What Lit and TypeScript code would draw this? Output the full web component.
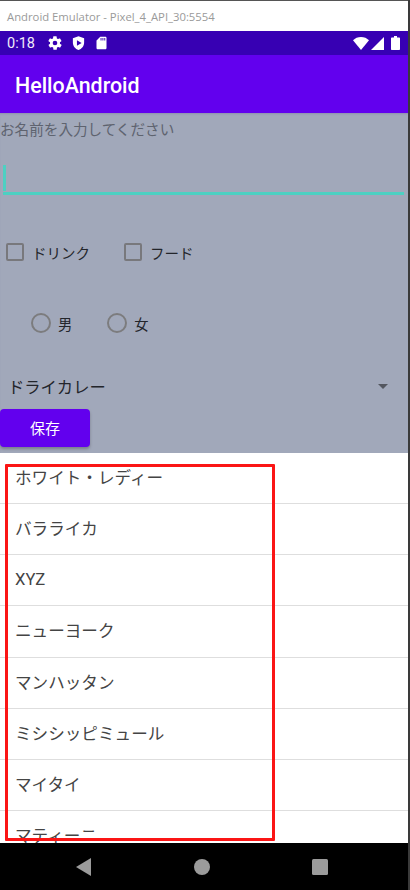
import { LitElement, html, css, svg } from "lit";
import { customElement } from "lit/decorators.js";

const drinks = [
  "ホワイト・レディー",
  "バラライカ",
  "XYZ",
  "ニューヨーク",
  "マンハッタン",
  "ミシシッピミュール",
  "マイタイ",
  "マティーニ",
];

const gear = svg`<path fill="#fff" d="M19.4 13a7.5 7.5 0 0 0 0-2l2.1-1.6a.5.5 0 0 0 .1-.6l-2-3.5a.5.5 0 0 0-.6-.2l-2.5 1a7.3 7.3 0 0 0-1.7-1l-.4-2.7a.5.5 0 0 0-.5-.4h-4a.5.5 0 0 0-.5.4l-.4 2.7a7.3 7.3 0 0 0-1.7 1l-2.5-1a.5.5 0 0 0-.6.2l-2 3.5a.5.5 0 0 0 .1.6L4.6 11a7.5 7.5 0 0 0 0 2l-2.1 1.6a.5.5 0 0 0-.1.6l2 3.5c.1.2.4.3.6.2l2.5-1c.5.4 1.1.7 1.7 1l.4 2.7c0 .2.2.4.5.4h4c.3 0 .5-.2.5-.4l.4-2.7c.6-.3 1.2-.6 1.7-1l2.5 1c.2.1.5 0 .6-.2l2-3.5a.5.5 0 0 0-.1-.6zM12 15.5a3.5 3.5 0 1 1 0-7 3.5 3.5 0 0 1 0 7z"/>`;
const shield = svg`<path fill="#fff" fill-rule="evenodd" d="M12 1 3 4.500v6.600c0 5.500 3.800 10.500 9 11.900 5.200-1.400 9-6.400 9-11.900V4.500zM9.500 7.500l7.500 4.500-7.500 4.500z"/>`;
const sdCard = svg`<path fill="#fff" d="M18 2h-8L4 8v12c0 1.100.9 2 2 2h12c1.100 0 2-.9 2-2V4c0-1.100-.9-2-2-2zm-6 6h-1.500V4H12zm3 0h-1.500V4H15zm3 0h-1.500V4H18z"/>`;

@customElement("app-root")
export class AppRoot extends LitElement {
  static override styles = css`
    :host {
      display: flex;
      flex-direction: column;
      position: relative;
      width: 410px;
      height: 890px;
      overflow: hidden;
      font-family: Roboto, "Noto Sans CJK JP", sans-serif;
      background: #fff;
    }

    .title-bar {
      flex: none;
      height: 31px;
      box-sizing: border-box;
      padding: 0 0 0 7px;
      display: flex;
      align-items: center;
      background: #fff;
      border-top: 1px solid #555;
      color: #9a9a9a;
      font-family: "Open Sans", sans-serif;
      font-size: 11.3px;
    }

    .status-bar {
      flex: none;
      height: 24px;
      display: flex;
      align-items: center;
      background: #3700b3;
      color: #fff;
      padding: 0 10px 0 7px;
      font-size: 14.5px;
    }
    .status-bar .time {
      width: 40px;
      color: #f0ecfa;
    }
    .status-bar svg {
      display: block;
      flex: none;
    }
    .status-icons {
      display: flex;
      align-items: center;
      gap: 8px;
    }
    .status-right {
      margin-left: auto;
      display: flex;
      align-items: center;
      gap: 2px;
    }

    .app-bar {
      flex: none;
      height: 58px;
      box-sizing: border-box;
      padding: 3px 0 0 15px;
      display: flex;
      align-items: center;
      background: #6200ee;
      color: #fff;
      font-size: 21.4px;
      font-weight: 500;
    }

    .form {
      flex: none;
      height: 340px;
      box-sizing: border-box;
      display: flex;
      flex-direction: column;
      background: #a1a8ba;
      color: #23252b;
      box-shadow: inset 0 2px 2px -1px #8f8fb0;
    }

    .hint {
      height: 32px;
      padding-top: 1px;
      line-height: 33px;
      font-size: 14.6px;
      color: #5e636f;
    }

    .input {
      position: relative;
      margin: 19px 6px 0 3px;
      height: 30px;
      box-sizing: border-box;
      border-bottom: 3px solid #4dd0c2;
    }
    .input::before {
      content: "";
      position: absolute;
      left: 0;
      top: 0;
      bottom: 1px;
      width: 3px;
      background: #4dd0c2;
    }

    .checks {
      margin-top: 47px;
      height: 20px;
      display: flex;
      align-items: center;
      padding-left: 6px;
      font-size: 14.5px;
    }
    .box {
      width: 18px;
      height: 18px;
      box-sizing: border-box;
      border: 2px solid #78787c;
      border-radius: 2px;
      margin-right: 8px;
    }
    .checks .gap {
      width: 34px;
    }

    .radios {
      margin-top: 50px;
      height: 22px;
      display: flex;
      align-items: center;
      padding-left: 31px;
      font-size: 14.3px;
    }
    .circle {
      width: 20px;
      height: 20px;
      box-sizing: border-box;
      border: 2px solid #7c7c7e;
      border-radius: 50%;
      margin-right: 7px;
    }
    .radios .gap {
      width: 35px;
    }

    .spinner {
      margin-top: 37px;
      height: 30px;
      display: flex;
      align-items: center;
      justify-content: space-between;
      padding: 0 22px 0 8px;
      font-size: 16.3px;
    }
    .arrow {
      width: 0;
      height: 0;
      border-left: 5px solid transparent;
      border-right: 5px solid transparent;
      border-top: 5px solid #53565f;
    }

    .save {
      margin-top: 8px;
      width: 90px;
      height: 38px;
      padding: 0 0 1px;
      border: none;
      border-radius: 4px;
      background: #6200ee;
      color: #fff;
      font: inherit;
      font-size: 15px;
      box-shadow: 0 2px 3px rgba(0, 0, 0, 0.25);
    }

    .list {
      flex: 1;
      min-height: 0;
      overflow: hidden;
      background: #fff;
      color: #444;
    }
    .row {
      height: 50.2px;
      box-sizing: content-box;
      display: flex;
      align-items: center;
      padding-left: 15px;
      font-size: 16.6px;
      border-bottom: 1px solid #dedede;
    }
    .row span {
      position: relative;
      top: -1px;
    }
    .row:first-child {
      height: 51px;
      align-items: flex-end;
      padding-bottom: 13px;
      box-sizing: border-box;
    }

    .nav {
      flex: none;
      height: 47px;
      display: flex;
      align-items: center;
      background: #000;
      padding-left: 76px;
      gap: 102px;
    }
    .nav svg {
      display: block;
    }

    .highlight {
      position: absolute;
      left: 5px;
      top: 464px;
      width: 270px;
      height: 377px;
      box-sizing: border-box;
      border: 3px solid #fb1515;
      border-radius: 1px;
    }

    .window-edge {
      position: absolute;
      top: 0;
      right: 0;
      width: 2px;
      height: 100%;
      background: #3a3a3a;
    }
  `;

  override render() {
    return html`
      <div class="title-bar">Android Emulator - Pixel_4_API_30:5554</div>
      <div class="status-bar">
        <span class="time">0:18</span>
        <div class="status-icons">
          <svg width="16" height="16" viewBox="0 0 24 24">${gear}</svg>
          <svg width="15" height="16" viewBox="0 0 24 24">${shield}</svg>
          <svg width="15" height="16" viewBox="0 0 24 24">${sdCard}</svg>
        </div>
        <div class="status-right">
          <svg width="16" height="13" viewBox="0 0 16 13">
            <path fill="#fff" d="M0 3.300C2 1.200 4.900 0 8 0s6 1.200 8 3.300L8 13z" />
          </svg>
          <svg width="13" height="13" viewBox="0 0 13 13">
            <path fill="#fff" d="M13 0v13H0z" />
          </svg>
          <svg style="margin-left:5px" width="9" height="14" viewBox="0 0 9 14">
            <path fill="#fff" d="M3 0h3v1.500h2c.6 0 1 .4 1 1V13c0 .6-.4 1-1 1H1c-.6 0-1-.4-1-1V2.500c0-.6.4-1 1-1h2z" />
          </svg>
        </div>
      </div>
      <div class="app-bar">HelloAndroid</div>
      <div class="form">
        <div class="hint">お名前を入力してください</div>
        <div class="input"></div>
        <div class="checks">
          <span class="box"></span><span>ドリンク</span>
          <span class="gap"></span>
          <span class="box"></span><span>フード</span>
        </div>
        <div class="radios">
          <span class="circle"></span><span>男</span>
          <span class="gap"></span>
          <span class="circle"></span><span>女</span>
        </div>
        <div class="spinner">
          <span>ドライカレー</span>
          <span class="arrow"></span>
        </div>
        <button class="save">保存</button>
      </div>
      <div class="list">
        ${drinks.map((name) => html`<div class="row"><span>${name}</span></div>`)}
      </div>
      <div class="nav">
        <svg width="16" height="18" viewBox="0 0 16 18">
          <path fill="#9b9b9b" d="M15 0v18L0 9z" />
        </svg>
        <svg width="16" height="16" viewBox="0 0 16 16">
          <circle cx="8" cy="8" r="8" fill="#9b9b9b" />
        </svg>
        <svg width="16" height="16" viewBox="0 0 16 16">
          <rect width="16" height="16" rx="1.500" fill="#9b9b9b" />
        </svg>
      </div>
      <div class="highlight"></div>
      <div class="window-edge"></div>
    `;
  }
}

declare global {
  interface HTMLElementTagNameMap {
    "app-root": AppRoot;
  }
}
